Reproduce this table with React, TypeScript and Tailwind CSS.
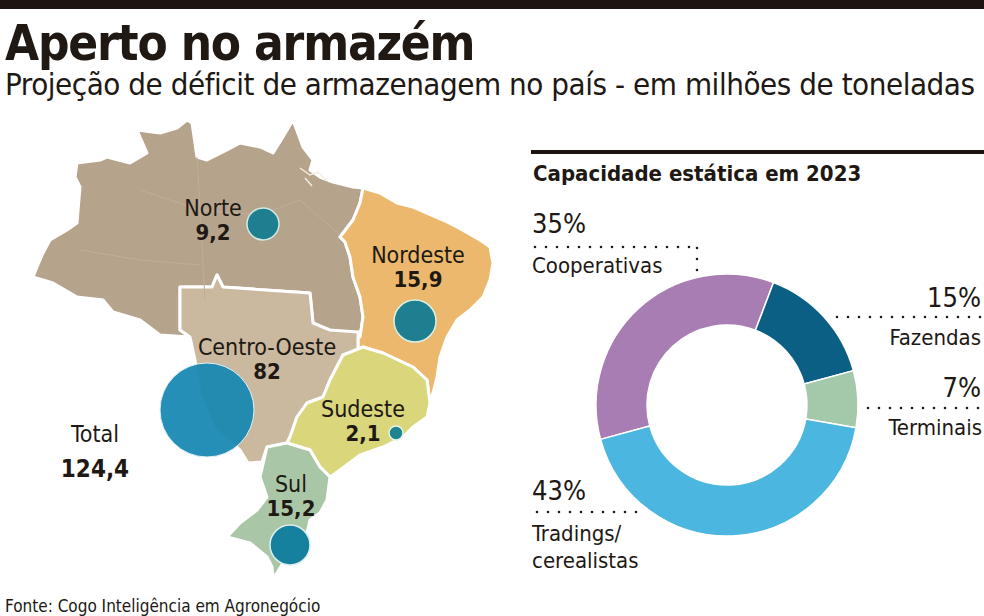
import React from 'react';

const INK = '#201813';

// map regions, page coordinates
const regions = [
  {
    name: 'Norte',
    fill: '#b6a38c',
    d: 'M77,163 L100,160 L107,157 L130,163 L147,153 L140,137 L137,130 L160,133 L177,128 L187,120 L192,123 L197,157 L207,160 L227,150 L240,143 L260,147 L273,153 L283,137 L293,120 L303,147 L313,160 L310,170 L320,177 L333,182 L353,187 L363,188 L360,203 L353,220 L340,237 L345,242 L350,257 L353,277 L360,297 L363,317 L360,337 L330,333 L313,323 L310,293 L223,287 L217,275 L212,287 L180,287 L180,330 L190,337 L160,335 L140,320 L113,312 L103,300 L77,297 L53,283 L33,277 L37,267 L43,253 L50,240 L67,230 L77,223 L80,187 L75,177 Z',
  },
  {
    name: 'Nordeste',
    fill: '#ebb86d',
    d: 'M363,188 L380,193 L397,203 L413,207 L443,220 L457,227 L480,240 L490,247 L493,263 L490,280 L483,297 L470,310 L457,320 L447,337 L440,357 L437,377 L433,393 L430,403 L427,380 L413,367 L383,353 L363,347 L358,350 L358,332 L360,337 L363,317 L360,297 L353,277 L350,257 L345,242 L340,237 L353,220 L360,203 Z',
  },
  {
    name: 'Centro-Oeste',
    fill: '#cbb99f',
    d: 'M180,287 L212,287 L217,275 L223,287 L310,293 L313,323 L330,330 L358,332 L358,350 L343,355 L330,380 L323,397 L307,403 L297,417 L290,437 L287,443 L267,447 L262,462 L248,463 L240,450 L215,430 L200,395 L195,360 L190,337 L180,330 Z',
  },
  {
    name: 'Sudeste',
    fill: '#d9d67b',
    d: 'M343,355 L363,347 L383,353 L413,367 L427,380 L430,403 L427,417 L413,427 L403,437 L383,447 L360,455 L340,470 L330,477 L320,467 L310,450 L287,443 L290,437 L297,417 L307,403 L323,397 L330,380 Z',
  },
  {
    name: 'Sul',
    fill: '#a9c7a7',
    d: 'M267,447 L287,443 L310,450 L320,467 L330,477 L327,500 L320,513 L310,520 L307,533 L297,553 L283,563 L277,573 L273,578 L272,567 L267,557 L250,543 L227,537 L240,523 L257,510 L267,497 L260,477 Z',
  },
];

const labels = [
  { name: 'Norte', value: '9,2', x: 213, y: 216 },
  { name: 'Nordeste', value: '15,9', x: 418, y: 263 },
  { name: 'Centro-Oeste', value: '82', x: 267, y: 355 },
  { name: 'Sudeste', value: '2,1', x: 363, y: 417 },
  { name: 'Sul', value: '15,2', x: 291, y: 492 },
];

const BrazilMap = () => (
  <svg className="w-[531px] h-[490px] shrink-0" viewBox="0 100 531 490">
    {regions.map((r) => (
      <path key={r.name} d={r.d} fill={r.fill} stroke="#fff" strokeWidth={3} strokeLinejoin="round" />
    ))}
    {/* faint state lines in the north */}
    <path d="M140,190 L200,210 L205,300 M197,157 L200,210 L260,215 L300,200 M300,200 L340,235 M80,250 L140,260 L200,265" fill="none" stroke="#bfae98" strokeWidth={1} />
    <path d="M300,168 L310,175 L318,172 L326,180 M305,178 L312,186" fill="none" stroke="#f3ebe0" strokeWidth={1.5} />

    <circle cx={263} cy={224} r={16} fill="#1d7f8f" stroke="#d3ebe4" strokeWidth={1.5} />
    <circle cx={415} cy={321} r={21} fill="#1d7f8f" stroke="#dcefe4" strokeWidth={1.5} />
    <circle cx={207} cy={410} r={47} fill="#1687b2" fillOpacity={0.93} stroke="#e3f1f4" strokeWidth={1} />
    <circle cx={396} cy={433} r={7} fill="#1d8490" stroke="#e8f3e8" strokeWidth={1.5} />
    <circle cx={290} cy={545} r={20} fill="#16809f" stroke="#dfeeee" strokeWidth={1.5} />

    {labels.map((l) => (
      <g key={l.name} fill={INK} textAnchor="middle">
        <text x={l.x} y={l.y} fontSize={23}>{l.name}</text>
        <text x={l.x} y={l.y + 24} fontSize={22} fontWeight={700}>{l.value}</text>
      </g>
    ))}
    <g fill={INK} textAnchor="middle">
      <text x={95} y={442} fontSize={23}>Total</text>
      <text x={95} y={477} fontSize={24} fontWeight={700}>124,4</text>
    </g>
  </svg>
);

// donut: angles in degrees, clockwise from the top
const CX = 727;
const CY = 405;
const R = 131;
const RI = 80;

const pt = (r: number, a: number) => {
  const rad = (a * Math.PI) / 180;
  return `${(CX + r * Math.sin(rad)).toFixed(2)},${(CY - r * Math.cos(rad)).toFixed(2)}`;
};

const arc = (a0: number, a1: number) => {
  const large = a1 - a0 > 180 ? 1 : 0;
  return `M${pt(R, a0)} A${R},${R} 0 ${large} 1 ${pt(R, a1)} L${pt(RI, a1)} A${RI},${RI} 0 ${large} 0 ${pt(RI, a0)} Z`;
};

const slices = [
  { label: 'Cooperativas', from: 254.8, to: 380.8, color: '#a87db3' },
  { label: 'Fazendas', from: 20.8, to: 74.8, color: '#0c5f84' },
  { label: 'Terminais', from: 74.8, to: 100, color: '#a4c8aa' },
  { label: 'Tradings', from: 100, to: 254.8, color: '#4bb6e0' },
];

const Dots = ({ x1, x2, y }: { x1: number; x2: number; y: number }) => (
  <line x1={x1} y1={y} x2={x2} y2={y} stroke={INK} strokeWidth={2.6} strokeLinecap="round" strokeDasharray="0 11" />
);

// viewBox in page coordinates: the chart sits below the section title
const Donut = () => (
  <svg className="w-[453px] h-[405px]" viewBox="531 185 453 405">
    {slices.map((s) => (
      <path key={s.label} d={arc(s.from, s.to)} fill={s.color} stroke="#fff" strokeWidth={1.5} strokeLinejoin="round" />
    ))}

    <Dots x1={535} x2={692} y={247} />
    <line x1={697} y1={248} x2={697} y2={271} stroke={INK} strokeWidth={2.6} strokeLinecap="round" strokeDasharray="0 11" />
    <Dots x1={837} x2={984} y={317} />
    <Dots x1={868} x2={984} y={408} />
    <Dots x1={537} x2={647} y={512} />

    <g fill={INK}>
      <text x={532} y={233} fontSize={27}>35%</text>
      <text x={532} y={273} fontSize={22}>Cooperativas</text>
      <text x={981} y={307} fontSize={27} textAnchor="end">15%</text>
      <text x={981} y={345} fontSize={22} textAnchor="end">Fazendas</text>
      <text x={981} y={397} fontSize={27} textAnchor="end">7%</text>
      <text x={982} y={435} fontSize={22} textAnchor="end">Terminais</text>
      <text x={532} y={500} fontSize={27}>43%</text>
      <text x={532} y={541} fontSize={22}>Tradings/</text>
      <text x={532} y={568} fontSize={22}>cerealistas</text>
    </g>
  </svg>
);

export default function App() {
  return (
    <div className="w-[984px] h-[616px] overflow-hidden bg-white text-[#201813] font-['DejaVu_Sans_Condensed','DejaVu_Sans',sans-serif] font-stretch-condensed">
      <div className="h-[9px] bg-[#1c1410]" />
      <h1 className="mt-[10px] pl-[5px] text-[49px] leading-[50px] font-bold tracking-[-1.2px]">
        Aperto no armazém
      </h1>
      <p className="pl-[5px] text-[31px] leading-[31px] whitespace-nowrap tracking-[-0.45px]">
        Projeção de déficit de armazenagem no país - em milhões de toneladas
      </p>

      <div className="flex h-[490px]">
        <BrazilMap />
        <div className="flex-1 pt-[50px]">
          <div className="border-t-4 border-[#1c1410]" />
          <h2 className="mt-[9px] pl-[2px] text-[22px] leading-[22px] font-bold">Capacidade estática em 2023</h2>
          <Donut />
        </div>
      </div>
      <p className="mt-[8px] pl-[5px] text-[17px] leading-none">Fonte: Cogo Inteligência em Agronegócio</p>
    </div>
  );
}
